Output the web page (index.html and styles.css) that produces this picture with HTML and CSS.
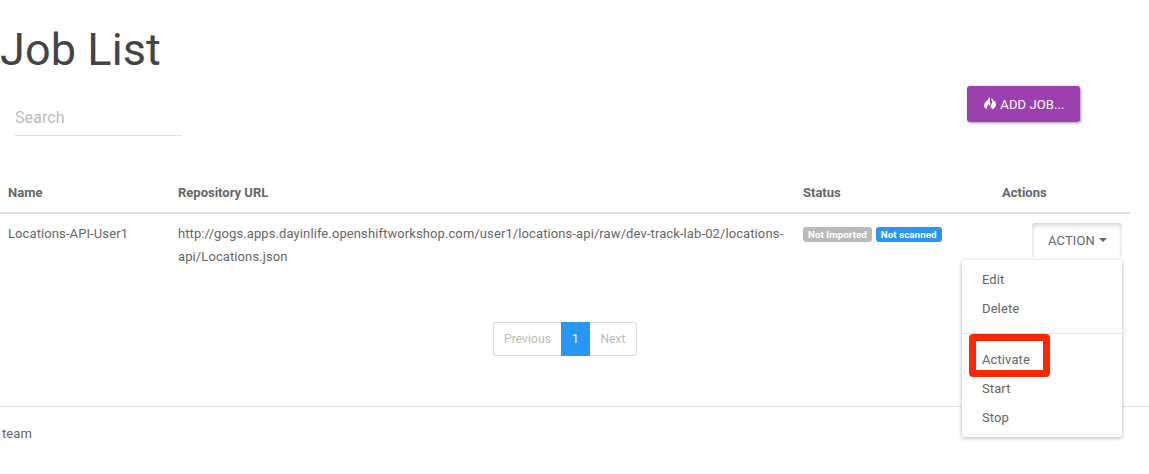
FILE: index.html
```html
<!DOCTYPE html>
<html lang="en">
<head>
<meta charset="utf-8">
<title>Job List</title>
<link rel="stylesheet" href="styles.css">
</head>
<body>
<main class="page">
  <h1 class="title">Job List</h1>
  <div class="toolbar">
    <input class="search" type="text" placeholder="Search" aria-label="Search">
    <button class="add" type="button">
      <svg class="flame" viewBox="0 0 12 13" aria-hidden="true"><path d="M4.7 0C5.1 1.9 3.6 2.9 2 4.5.6 5.9 0 7 .1 8.5c.1 2 1.4 3.4 3.5 3.9-.9-1.2-.8-2.5 0-3.5.7-.8.8-1.3.6-2 .9.3 1.2 1 .9 1.9.9-.4 1.3-1.2 1.1-2.2-.2-1-.7-1.8-.4-2.8C6.3 2.3 6.3.7 4.7 0z"/><path d="M7.4 1.5c2 .5 2.3 1.7 2.3 3.3.5-.2.7-.5.8-1 1.1 1.1 1.5 2.4 1.4 4-.1 2.4-1.7 4-4 4.7-.2-1.100.3-1.700.9-2.600-.7.1-1.300.7-1.800 1.500-.7-1.500-.5-2.500.2-3.600C8.100 6.300 8.400 4.600 7.600 3.300 7.300 2.700 7.200 2.100 7.400 1.500z"/></svg>
      <span>ADD JOB...</span>
    </button>
  </div>
  <table class="jobs">
    <colgroup><col class="c-name"><col class="c-url"><col class="c-status"><col class="c-actions"></colgroup>
    <thead><tr><th>Name</th><th>Repository URL</th><th>Status</th><th>Actions</th></tr></thead>
    <tbody><tr>
      <td>Locations-API-User1</td>
      <td>http://gogs.apps.dayinlife.openshiftworkshop.com/user1/locations-api/raw/dev-track-lab-02/locations-api/Locations.json</td>
      <td><div class="labels"><span class="label">Not Imported</span><span class="label info">Not scanned</span></div></td>
      <td>
        <div class="dropdown">
          <button class="action" type="button">ACTION<span class="caret"></span></button>
          <ul class="menu">
            <li>Edit</li>
            <li>Delete</li>
            <li class="divider"></li>
            <li class="marked">Activate</li>
            <li>Start</li>
            <li>Stop</li>
          </ul>
        </div>
      </td>
    </tr></tbody>
  </table>
  <nav class="pager">
    <span class="pg prev">Previous</span><span class="pg current">1</span><span class="pg next">Next</span>
  </nav>
</main>
<footer class="footer">team</footer>
</body>
</html>
```
FILE: styles.css
```css
*, *::after { box-sizing: border-box; }
body {
  margin: 0;
  height: 474px;
  overflow: hidden;
  background: #fff;
  color: #666;
  font: 13px/23px Roboto, sans-serif;
  letter-spacing: .1px;
}
button, input { font: inherit; letter-spacing: inherit; }
.page { width: 1130px; height: 406px; padding-top: 25px; }
.title {
  margin: 0;
  height: 49px;
  color: #444;
  font-size: 45px;
  font-weight: 400;
  line-height: 50px;
  letter-spacing: .1px;
}
.toolbar {
  display: flex;
  justify-content: space-between;
  height: 99px;
  padding: 12px 50px 0 15px;
}
.search {
  width: 167px;
  height: 37px;
  margin-top: 13px;
  padding: 0;
  border: 0;
  border-radius: 0;
  background: transparent;
  box-shadow: inset 0 -1px 0 #ddd;
  font-size: 16px;
  outline: 0;
}
.search::placeholder { color: #bbb; opacity: 1; }
.add {
  display: flex;
  align-items: center;
  justify-content: center;
  gap: 4px;
  width: 113px;
  height: 36px;
  padding: 0 0 0 2px;
  border: 0;
  border-radius: 3px;
  background: #9c40b0;
  color: #fff;
  box-shadow: 1px 1px 3px rgba(0, 0, 0, .4);
}
.flame { width: 12px; height: 13px; margin-top: -2px; fill: #fff; }
.jobs { width: 1130px; border-collapse: collapse; table-layout: fixed; }
.c-name { width: 170px; }
.c-url { width: 625px; }
.c-status { width: 199px; }
.jobs th, .jobs td { padding: 8px; text-align: left; vertical-align: top; }
.jobs th { height: 40px; padding-bottom: 7px; border-bottom: 2px solid #ddd; font-weight: 700; letter-spacing: 0; }
.labels { display: flex; gap: 4px; padding-top: 5px; }
.label {
  height: 15px;
  padding: 0 5px;
  border-radius: 3px;
  background: #bbb;
  color: #fff;
  font-size: 9.75px;
  font-weight: 700;
  letter-spacing: .05px;
  line-height: 16px;
  white-space: nowrap;
}
.info { background: #2996f3; }
.dropdown { position: relative; display: flex; justify-content: flex-end; height: 36px; }
.action {
  display: flex;
  align-items: center;
  justify-content: center;
  gap: 4px;
  width: 90px;
  height: 36px;
  margin-top: 1px;
  padding: 0 0 2px 1px;
  border: 0;
  border-radius: 3px;
  background: #fff;
  color: #666;
  box-shadow: inset 0 2px 4px rgba(0, 0, 0, .2);
  clip-path: inset(0 0 2px);
}
.caret { border: 4px solid transparent; border-top-color: #666; border-bottom: 0; }
.menu {
  position: absolute;
  top: 38px;
  right: 0;
  width: 160px;
  height: 177px;
  margin: 0;
  padding: 5px 0;
  border-radius: 3px;
  background: #fff;
  box-shadow: 0 1px 4px rgba(0, 0, 0, .3);
  list-style: none;
}
.menu li { padding: 3px 20px; }
.menu .divider { height: 1px; margin: 10px 0 11px; padding: 0; background: #e5e5e5; }
.marked { position: relative; }
.marked::after {
  content: "";
  position: absolute;
  top: -11px;
  left: 7px;
  width: 81px;
  height: 43px;
  border: 7px solid #ff2600;
  border-radius: 4px;
}
.pager {
  display: flex;
  width: 144px;
  height: 34px;
  margin: 46px auto 0 493px;
  font-size: 12px;
  line-height: 32px;
  text-align: center;
}
.pg { border: 1px solid #ddd; color: #bbb; }
.prev { width: 68px; border-right: 0; border-radius: 3px 0 0 3px; }
.current { width: 29px; border-color: #2996f3; background: #2996f3; color: #fff; }
.next { width: 47px; border-left: 0; border-radius: 0 3px 3px 0; }
.footer { padding: 15px 2px; border-top: 1px solid #ddd; }
```
